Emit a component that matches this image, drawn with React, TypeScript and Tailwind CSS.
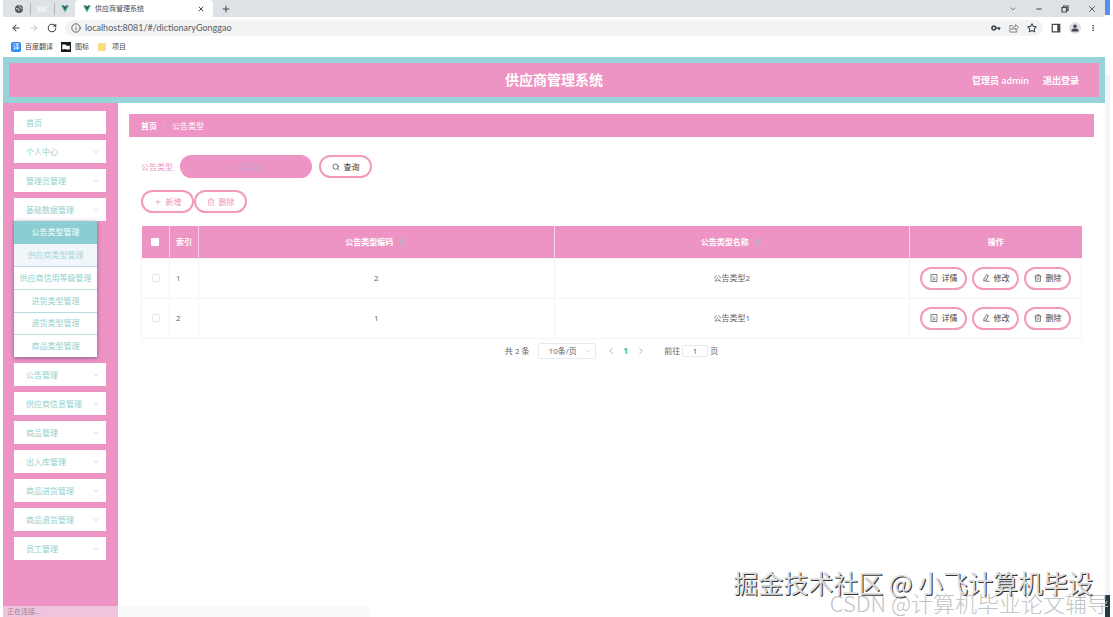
import type { ReactNode } from "react";
import {
  ArrowLeft,
  ArrowRight,
  ChevronDown,
  ChevronLeft,
  ChevronRight,
  Info,
  Minus,
  MoreVertical,
  Plus,
  RotateCw,
  Search,
  Star,
  X,
} from "lucide-react";

const baseMenu = [
  "公告类型管理",
  "供应商类型管理",
  "供应商信用等级管理",
  "进货类型管理",
  "退货类型管理",
  "商品类型管理",
];

const topMenu = ["个人中心", "管理员管理", "基础数据管理"];

const bottomMenu = [
  "公告管理",
  "供应商信息管理",
  "商品管理",
  "出入库管理",
  "商品进货管理",
  "商品退货管理",
  "员工管理",
];

const rows = [
  { id: 1, code: "2", name: "公告类型2" },
  { id: 2, code: "1", name: "公告类型1" },
];

function VueLogo() {
  return (
    <svg viewBox="0 0 16 14" className="h-2 w-2 shrink-0">
      <path d="M0 0h6l2 3.4L10 0h6L8 14z" fill="#41b883" />
      <path d="M3 0h3l2 3.4L10 0h3L8 8.8z" fill="#35495e" />
    </svg>
  );
}

function TrashIcon() {
  return (
    <svg viewBox="0 0 16 16" className="size-2 shrink-0" fill="none" stroke="currentColor" strokeWidth="1.3">
      <path d="M1 4h14M5.5 4V1.5h5V4M3 4v10.5h10V4M6.3 7v4.5M9.7 7v4.5" />
    </svg>
  );
}

function DocIcon() {
  return (
    <svg viewBox="0 0 16 16" className="size-2 shrink-0" fill="none" stroke="currentColor" strokeWidth="1.3">
      <path d="M2 1h12v14H2zM5 5h2M5 8h6M5 11.5h6" />
    </svg>
  );
}

function EditIcon() {
  return (
    <svg viewBox="0 0 16 16" className="size-2 shrink-0" fill="none" stroke="currentColor" strokeWidth="1.5">
      <path d="M9.5 1.5l3.5 2-5.5 9-4 1.5.5-4.5zM7 14.5h8" />
    </svg>
  );
}

function PillButton({ icon, children, className }: { icon: ReactNode; children: ReactNode; className: string }) {
  return (
    <button
      type="button"
      className={`inline-flex h-[23px] items-center justify-center gap-1 rounded-full border-2 border-[#f19bb9] bg-white ${className}`}
    >
      {icon}
      <span>{children}</span>
    </button>
  );
}

function MenuItem({ label, arrow = true }: { label: string; arrow?: boolean }) {
  return (
    <button type="button" className="flex h-[23px] w-full items-center justify-between bg-white pr-1.5 pl-3 text-[#8fcfce]">
      <span>{label}</span>
      {arrow && <ChevronDown className="size-2 text-[#b5d3d8]" strokeWidth={2} />}
    </button>
  );
}

function SortCaret() {
  return (
    <svg viewBox="0 0 8 12" className="h-2 w-2.5 fill-[#a9b9cf]">
      <path d="M4 0l4 5H0zM4 12l4-5H0z" />
    </svg>
  );
}

function Browser() {
  return (
    <header className="shrink-0 bg-white text-[7px] text-[#45484c]">
      {/* Tab strip */}
      <div className="flex h-[17px] items-center bg-[#dee1e6]">
        <div className="flex h-full w-[72px] items-center justify-between pr-1.5 pl-3">
          <svg viewBox="0 0 16 16" className="size-2">
            <circle cx="8" cy="8" r="8" fill="#55595e" />
            <path d="M2 7c2 0 3 1 5 1s0 3 2 4M8 1c-1 3 3 2 3 4s3 1 4 3" fill="none" stroke="#dee1e6" strokeWidth="2" />
          </svg>
          <span className="h-3 w-px bg-[#b3b7bc]" />
          <span className="h-1.5 w-2.5 bg-[#eceef1]" />
          <span className="h-3 w-px bg-[#b3b7bc]" />
          <VueLogo />
        </div>
        <div className="flex h-full w-[138px] items-center gap-1 rounded-t bg-white px-2">
          <VueLogo />
          <span className="flex-1">供应商管理系统</span>
          <button type="button" aria-label="Close tab">
            <X className="size-2" strokeWidth={3} />
          </button>
        </div>
        <button type="button" aria-label="New tab" className="ml-2">
          <Plus className="size-2.5" strokeWidth={2.5} />
        </button>
        <div className="ml-auto flex items-center gap-[18px] pr-2">
          <ChevronDown className="size-2" />
          <Minus className="size-2" strokeWidth={3} />
          <svg viewBox="0 0 16 16" className="size-2" fill="none" stroke="currentColor" strokeWidth="2.4">
            <path d="M2 5h9v9H2zM5 5V2h9v9h-3" />
          </svg>
          <X className="size-2.5" />
        </div>
      </div>

      {/* Address bar */}
      <div className="flex h-[21px] items-center gap-2 px-2">
        <div className="flex items-center gap-2">
          <ArrowLeft className="size-2.5" strokeWidth={2.5} />
          <ArrowRight className="size-2.5 text-[#b8babd]" />
          <RotateCw className="size-2.5" strokeWidth={2.5} />
        </div>
        <div className="flex h-4 flex-1 items-center gap-1 rounded-full bg-[#f1f3f4] px-1.5">
          <Info className="size-2.5" />
          <input
            aria-label="Address"
            className="min-w-0 flex-1 bg-transparent font-[Lato] text-[9px] text-[#5c6064] outline-none"
            defaultValue="localhost:8081/#/dictionaryGonggao"
          />
          <div className="flex items-center gap-2">
            <svg viewBox="0 0 16 16" className="size-2.5" fill="none" stroke="currentColor" strokeWidth="2.6">
              <circle cx="4.5" cy="8" r="3" />
              <path d="M7.5 8H15M13 8v3" />
            </svg>
            <svg viewBox="0 0 16 16" className="size-2.5" fill="none" stroke="#777" strokeWidth="1.4">
              <path d="M6 4H1.500v10.500h11V11M4.500 11c.5-4 3-5.500 6-5.500V2.500L15 7l-4.500 4.300V8.500c-3 0-4.500.5-6 2.500z" />
            </svg>
            <Star className="size-2.5" strokeWidth={2.5} />
          </div>
        </div>
        <div className="flex items-center gap-2">
          <svg viewBox="0 0 16 16" className="size-2.5">
            <path d="M2 2h12v12H2z" fill="none" stroke="currentColor" strokeWidth="2" />
            <path d="M10 2h4v12h-4z" fill="currentColor" />
          </svg>
          <span className="flex size-3 items-center justify-center rounded-full bg-[#dee1e6]">
            <svg viewBox="0 0 16 16" className="size-2 fill-[#45484c]">
              <circle cx="8" cy="4.500" r="3.500" />
              <path d="M1 15v-2c0-3 3-4 7-4s7 1 7 4v2z" />
            </svg>
          </span>
          <MoreVertical className="size-2" strokeWidth={3} />
        </div>
      </div>

      {/* Bookmarks */}
      <nav className="flex h-[19px] items-center gap-2 pb-0.5 pl-2">
        <a href="#" className="flex items-center gap-1">
          <span className="flex size-2.5 items-center justify-center rounded-xs bg-[#2a8cf5] text-white">译</span>
          百度翻译
        </a>
        <a href="#" className="flex items-center gap-1">
          <svg viewBox="0 0 16 16" className="size-2.5">
            <path d="M0 0h16v16H0z" fill="#1b1c1e" />
            <path d="M2 4h5l2 2h5v6h-5l-2-1-5 1z" fill="#fff" />
          </svg>
          图标
        </a>
        <a href="#" className="flex items-center gap-1.5 pl-px">
          <span className="size-2 rounded-[1px] bg-[#fbdf83]" />
          项目
        </a>
      </nav>
    </header>
  );
}

function Sidebar() {
  return (
    <aside className="w-[115px] shrink-0 bg-[#ee94c5] pt-2 pr-3 pl-[11px]">
      <nav className="flex flex-col gap-1.5">
        <MenuItem label="首页" arrow={false} />
        {topMenu.map((label) => (
          <MenuItem key={label} label={label} />
        ))}
        <ul className="-mt-1.5 grid h-[136px] w-[83px] grid-rows-6 bg-white shadow-[0_1px_4px_rgba(70,60,90,0.6)]">
          {baseMenu.map((label, i) => (
            <li
              key={label}
              className={
                i === 0
                  ? "bg-[#8bcdd2] text-white"
                  : i === 1
                    ? "bg-[#f1f6fb] text-[#a3d6d3]"
                    : "border-t border-[#b7dde0] text-[#8fcfce]"
              }
            >
              <a href="#" className="flex h-full items-center justify-center whitespace-nowrap">
                {label}
              </a>
            </li>
          ))}
        </ul>
        {bottomMenu.map((label) => (
          <MenuItem key={label} label={label} />
        ))}
      </nav>
    </aside>
  );
}

function TypeTable() {
  return (
    <table className="w-full table-fixed border-collapse text-[#606266]">
      <colgroup>
        <col className="w-[28px]" />
        <col className="w-[29px]" />
        <col />
        <col />
        <col className="w-[172px]" />
      </colgroup>
      <thead>
        <tr className="h-8 bg-[#ee94c5] text-white">
          <th className="border-r border-[#f8d3e6]">
            <input type="checkbox" aria-label="全选" className="mx-auto block size-2 appearance-none rounded-[1px] bg-white" />
          </th>
          <th className="border-r border-[#f8d3e6]">索引</th>
          <th className="border-r border-[#f8d3e6]">
            <span className="inline-flex items-center gap-1">
              公告类型编码
              <SortCaret />
            </span>
          </th>
          <th className="border-r border-[#f8d3e6]">
            <span className="inline-flex items-center gap-1">
              公告类型名称
              <SortCaret />
            </span>
          </th>
          <th>操作</th>
        </tr>
      </thead>
      <tbody>
        {rows.map((row) => (
          <tr key={row.id} className="h-10 text-center">
            <td className="border border-[#f5f5f6]">
              <input
                type="checkbox"
                aria-label={row.name}
                className="mx-auto block size-2 appearance-none rounded-xs border border-[#e2e4e8]"
              />
            </td>
            <td className="border border-[#f5f5f6] pl-1.5 text-left">{row.id}</td>
            <td className="border border-[#f5f5f6]">{row.code}</td>
            <td className="border border-[#f5f5f6]">{row.name}</td>
            <td className="border border-[#f5f5f6]">
              <div className="flex justify-center gap-[5px]">
                <PillButton className="w-[47px] text-[#444]" icon={<DocIcon />}>
                  详情
                </PillButton>
                <PillButton className="w-[47px] text-[#444]" icon={<EditIcon />}>
                  修改
                </PillButton>
                <PillButton className="w-[47px] text-[#444]" icon={<TrashIcon />}>
                  删除
                </PillButton>
              </div>
            </td>
          </tr>
        ))}
      </tbody>
    </table>
  );
}

function Pager() {
  return (
    <div className="mt-1 flex h-4 items-center justify-center text-[#606266]">
      <span>共 2 条</span>
      <div className="relative ml-2">
        <select
          aria-label="每页条数"
          className="block h-4 w-[58px] appearance-none rounded-xs border border-[#e8eaee] bg-white pl-2.5"
        >
          <option>10条/页</option>
        </select>
        <ChevronDown className="pointer-events-none absolute top-1 right-1 size-2 text-[#c8ccd4]" />
      </div>
      <div className="mx-2.5 flex items-center gap-2">
        <button type="button" aria-label="上一页">
          <ChevronLeft className="size-2.5 text-[#a5a8ae]" />
        </button>
        <button type="button" className="font-bold text-[#35b58c]">
          1
        </button>
        <button type="button" aria-label="下一页">
          <ChevronRight className="size-2.5 text-[#a5a8ae]" />
        </button>
      </div>
      <label className="ml-2 flex items-center gap-0.5">
        前往
        <input className="h-3 w-[26px] rounded-xs border border-[#e8eaee] text-center" defaultValue="1" />
        页
      </label>
    </div>
  );
}

export default function App() {
  return (
    <div className="relative flex h-screen overflow-hidden bg-white pl-[3px] font-['Open_Sans','Noto_Sans_CJK_SC',sans-serif] text-[8px] leading-none">
      <div className="flex min-w-0 flex-1 flex-col">
        <Browser />

        <div className="grid h-[46px] shrink-0 grid-cols-[1fr_auto_1fr] items-center border-[6px] border-[#97d4da] bg-[#ee94c5] px-5 text-[9px] text-white">
          <h1 className="col-start-2 text-sm leading-none font-bold">供应商管理系统</h1>
          <div className="flex justify-end gap-3.5 font-semibold">
            <span>管理员 admin</span>
            <a href="#">退出登录</a>
          </div>
        </div>

        <div className="flex min-h-0 flex-1">
          <Sidebar />
          <main className="min-w-0 flex-1 px-[11px] pt-[11px]">
            <div className="flex h-[23px] items-center gap-1.5 bg-[#ee94c5] px-3 text-white">
              <a href="#" className="font-bold">
                首页
              </a>
              <span className="text-[#c3bfe0]">/</span>
              <span>公告类型</span>
            </div>

            <div className="px-3 pt-[18px]">
              <form className="flex items-center gap-[7px]">
                <label htmlFor="type" className="text-[#ee94c5]">
                  公告类型
                </label>
                <input
                  id="type"
                  placeholder="公告类型"
                  className="h-[23px] w-[132px] rounded-full bg-[#ee94c5] text-center text-white placeholder:text-[#c5a3cf]"
                />
                <PillButton className="w-[53px] text-[#333]" icon={<Search className="size-2" />}>
                  查询
                </PillButton>
              </form>

              <div className="mt-3 mb-[13px] flex text-[#ee94b8]">
                <PillButton className="w-[53px]" icon={<Plus className="size-2" />}>
                  新增
                </PillButton>
                <PillButton className="w-[53px]" icon={<TrashIcon />}>
                  删除
                </PillButton>
              </div>

              <TypeTable />
              <Pager />
            </div>
          </main>
        </div>
      </div>

      {/* Edge of the window behind, with the page scrollbar */}
      <div className="flex w-2 shrink-0 flex-col pr-[3px]">
        <span className="h-[15px] bg-[#5b8def]" />
        <span className="mt-[60px] flex-1 bg-[#f4f5f8]" />
        <span className="h-[22px] bg-[#213b47]" />
      </div>

      <div className="absolute bottom-0 left-[3px] flex h-[11px] w-[367px] items-center rounded-tr-md bg-[#f1f3f5]/50 pl-1 text-[7px] text-[#9a8a96]">
        正在连接...
      </div>

      {/* Watermarks */}
      <div className="absolute right-1 bottom-1 font-['Noto_Sans_CJK_SC',sans-serif] text-[22px] font-light whitespace-nowrap text-[#c4c4c4]">
        CSDN @计算机毕业论文辅导
      </div>
      <div className="absolute right-5 bottom-[22px] font-['Noto_Sans_CJK_SC',sans-serif] text-[25px] whitespace-nowrap text-[#dcdcdc] [text-shadow:1px_1px_0_#333]">
        掘金技术社区 @ 小飞计算机毕设
      </div>
    </div>
  );
}
